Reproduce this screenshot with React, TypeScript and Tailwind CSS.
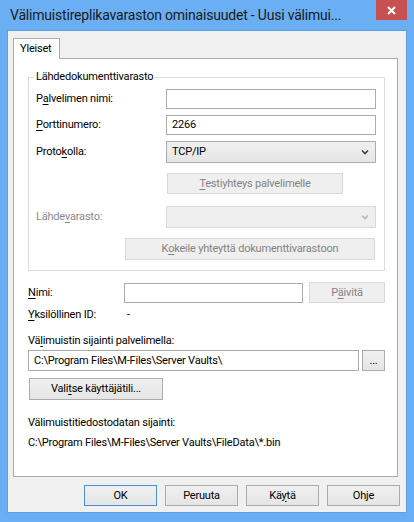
import type { ReactNode } from 'react';
import clsx from 'clsx';

// Access-key underline, as Windows draws it under one letter of a label
function K({ children }: { children: ReactNode }) {
  return <span className="underline underline-offset-[2px]">{children}</span>;
}

function TextBox({ value = '', className = '' }: { value?: string; className?: string }) {
  return (
    <div
      className={clsx(
        'flex h-[20px] items-center border border-[#ababab] bg-white pl-[5px] text-black',
        className,
      )}
    >
      {value}
    </div>
  );
}

function Button({
  children,
  className = '',
  disabled = false,
  primary = false,
}: {
  children: ReactNode;
  className?: string;
  disabled?: boolean;
  primary?: boolean;
}) {
  return (
    <button
      type="button"
      className={clsx(
        'flex h-[21px] items-center justify-center border leading-[16px]',
        disabled
          ? 'border-[#d9d9d9] bg-[#efefef] text-[#838383]'
          : 'bg-linear-to-b from-[#f0f0f0] to-[#e5e5e5] text-black',
        !disabled && (primary ? 'border-[#4a90d9]' : 'border-[#acacac]'),
        className,
      )}
    >
      {children}
    </button>
  );
}

function Chevron({ color }: { color: string }) {
  return (
    <svg width="8" height="6" viewBox="0 0 8 6" className="shrink-0">
      <path d="M1 1.5 L4 4.5 L7 1.5" fill="none" stroke={color} strokeWidth="1.6" />
    </svg>
  );
}

function Combo({ value, disabled = false }: { value?: string; disabled?: boolean }) {
  return (
    <div
      className={clsx(
        'flex h-[22px] w-[210px] items-center justify-between border pl-[5px] pr-[6px]',
        disabled
          ? 'border-[#d9d9d9] bg-[#efefef]'
          : 'border-[#acacac] bg-linear-to-b from-[#f0f0f0] to-[#e5e5e5] text-black',
      )}
    >
      <span>{value}</span>
      <Chevron color={disabled ? '#b8b8b8' : '#404040'} />
    </div>
  );
}

export default function App() {
  return (
    <div className="flex h-[522px] w-[414px] flex-col bg-[#6aaff4] font-['Roboto',sans-serif] text-[11px] leading-[16px] tracking-[-0.2px] text-black">
      {/* Title bar */}
      <div className="flex h-[30px] shrink-0 items-start">
        <div className="flex h-[30px] flex-1 items-center overflow-hidden whitespace-nowrap pl-[10px] text-[14px] text-[#1a1a1a]">
          Välimuistireplikavaraston ominaisuudet - Uusi välimui...
        </div>
        <div className="mr-[7px] flex h-[20px] w-[31px] shrink-0 items-center justify-center bg-[#c75050]">
          <svg width="9" height="9" viewBox="0 0 9 9">
            <path d="M1 1 L8 8 M8 1 L1 8" stroke="#fff" strokeWidth="2" />
          </svg>
        </div>
      </div>

      {/* Client area */}
      <div className="mx-[7px] flex h-[483px] flex-col border border-[#5d9fe2] bg-[#f0f0f0] pl-[5px] pt-[7px]">
        {/* Tab header */}
        <div className="relative z-10 -mb-px flex h-[21px] w-[47px] items-center border border-b-0 border-[#acacac] bg-white pl-[6px]">
          Yleiset
        </div>

        {/* Tab page */}
        <div className="flex h-[419px] w-[385px] flex-col border border-[#acacac] bg-white pl-[14px] pt-[10px]">
          <fieldset className="w-[357px] border border-[#dcdcdc] pb-[10px] pl-[5px]">
            <legend className="px-[2px] leading-[16px]">Lähdedokumenttivarasto</legend>
            <div className="pl-[2px]">
              <div className="mt-[4px] flex h-[20px] items-center">
                <span className="w-[130px]">
                  P<K>a</K>lvelimen nimi:
                </span>
                <TextBox className="w-[210px]" />
              </div>
              <div className="mt-[6px] flex h-[20px] items-center">
                <span className="w-[130px]">
                  <K>P</K>orttinumero:
                </span>
                <TextBox className="w-[210px]" value="2266" />
              </div>
              <div className="mt-[6px] flex h-[22px] items-center">
                <span className="w-[130px]">
                  Proto<K>k</K>olla:
                </span>
                <Combo value="TCP/IP" />
              </div>
              <div className="mt-[10px] flex">
                <Button disabled className="ml-[131px] w-[176px]">
                  <span>
                    <K>T</K>estiyhteys palvelimelle
                  </span>
                </Button>
              </div>
              <div className="mt-[12px] flex h-[22px] items-center">
                <span className="w-[130px] text-[#8a8a8a]">
                  Lähde<K>v</K>arasto:
                </span>
                <Combo disabled />
              </div>
              <div className="mt-[10px] flex">
                <Button disabled className="ml-[89px] h-[22px] w-[250px]">
                  <span>
                    K<K>o</K>keile yhteyttä dokumenttivarastoon
                  </span>
                </Button>
              </div>
            </div>
          </fieldset>

          <div className="mt-[11px] flex h-[21px] items-center">
            <span className="w-[96px]">
              <K>N</K>imi:
            </span>
            <TextBox className="w-[179px]" />
            <Button disabled className="ml-[6px] w-[76px]">
              <span>
                P<K>ä</K>ivitä
              </span>
            </Button>
          </div>

          <div className="mt-[4px] flex h-[16px] items-center">
            <span className="w-[99px]">
              <K>Y</K>ksilöllinen ID:
            </span>
            <span>-</span>
          </div>

          <div className="mt-[10px] h-[16px]">
            Vä<K>l</K>imuistin sijainti palvelimella:
          </div>

          <div className="mt-[1px] flex h-[21px] items-center gap-[3px]">
            <TextBox className="h-[21px] w-[331px]" value="C:\Program Files\M-Files\Server Vaults\" />
            <Button className="w-[23px]">
              <span className="leading-[14px]">...</span>
            </Button>
          </div>

          <div className="mt-[7px] flex">
            <Button className="ml-px h-[22px] w-[134px]">
              <span>
                Vali<K>t</K>se käyttäjätili...
              </span>
            </Button>
          </div>

          <div className="mt-[15px] h-[16px]">Välimuistitiedostodatan sijainti:</div>
          <div className="mt-[4px] h-[16px]">C:\Program Files\M-Files\Server Vaults\FileData\*.bin</div>
        </div>

        {/* Dialog buttons */}
        <div className="mt-[8px] flex justify-end gap-[8px] pr-[6px]">
          <Button primary className="w-[73px]">
            OK
          </Button>
          <Button className="w-[73px]">Peruuta</Button>
          <Button className="w-[73px]">
            <span>
              Kä<K>y</K>tä
            </span>
          </Button>
          <Button className="w-[73px]">Ohje</Button>
        </div>
      </div>
    </div>
  );
}
